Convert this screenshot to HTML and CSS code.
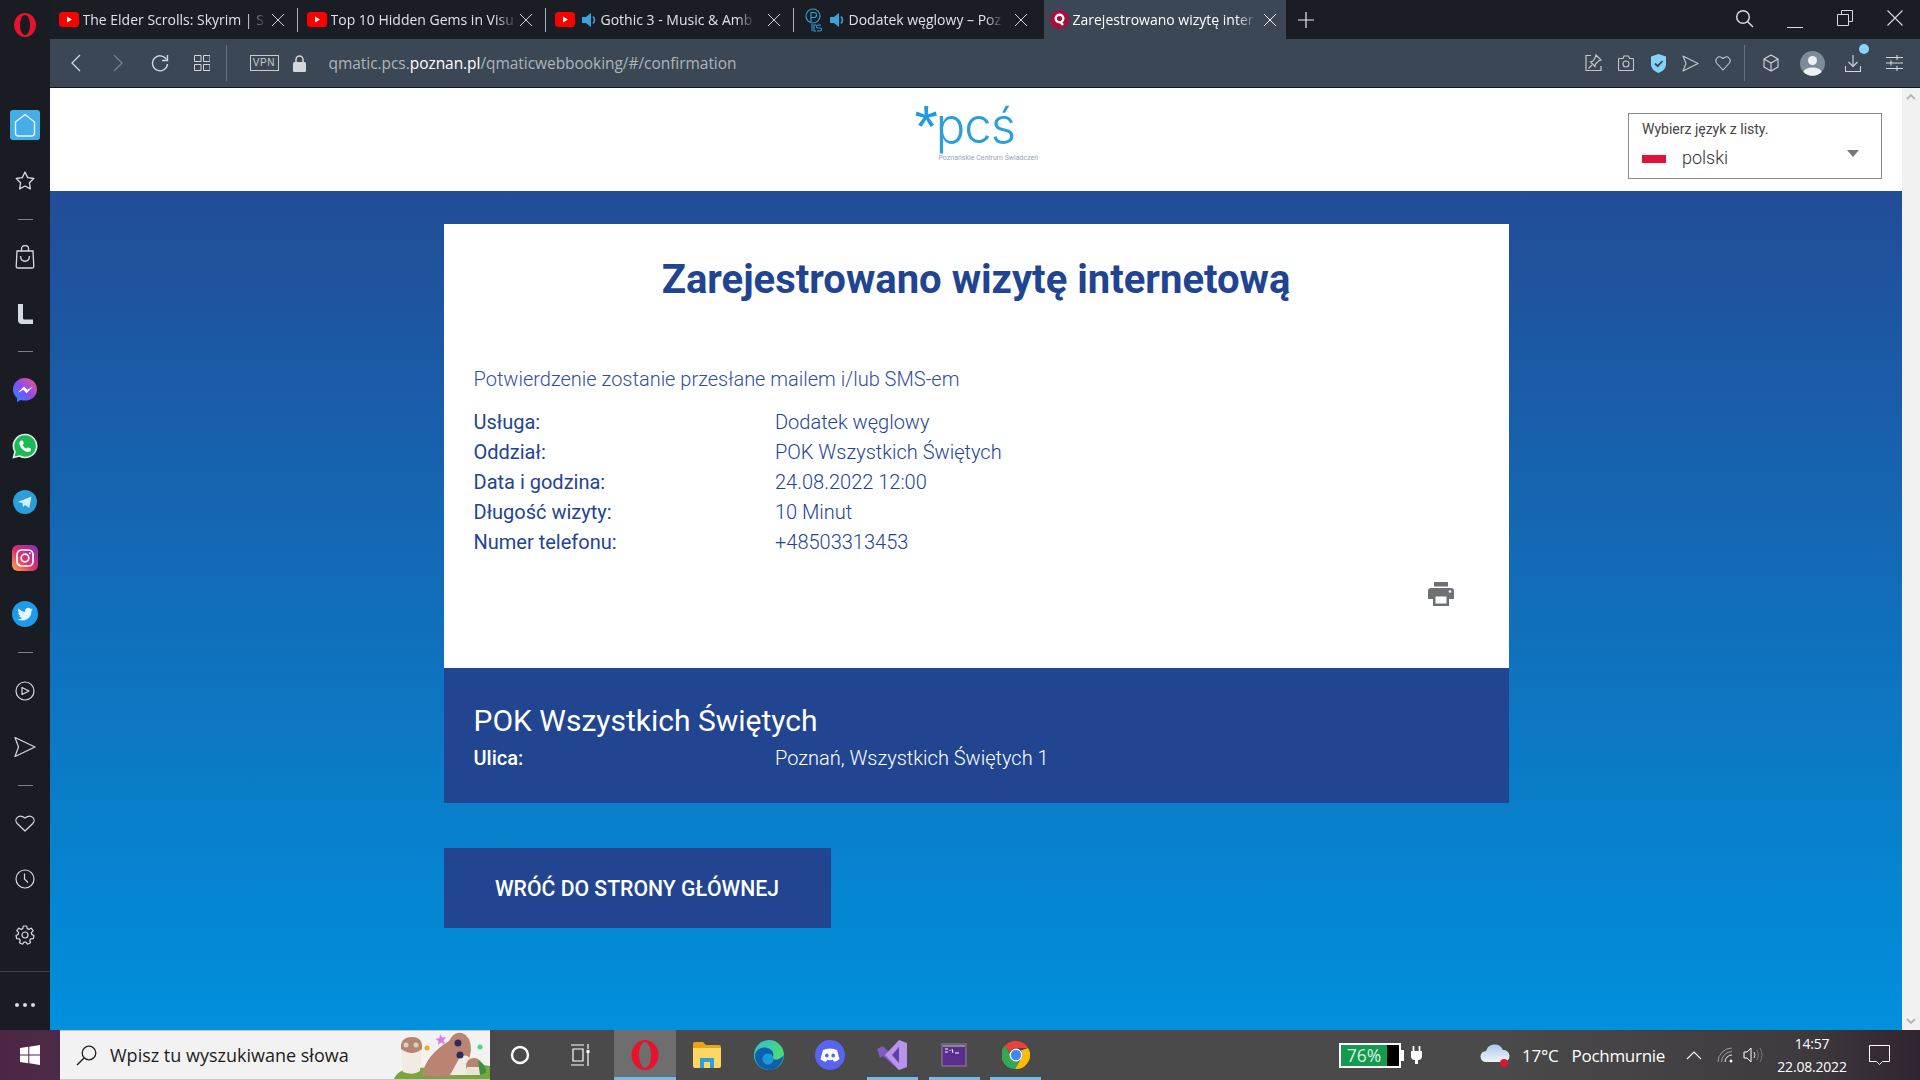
FILE: index.html
```html
<!DOCTYPE html>
<html lang="pl">
<head>
<meta charset="utf-8">
<title>Zarejestrowano wizytę internetową</title>
<link rel="stylesheet" href="styles.css">
</head>
<body>
<div class="screen">
  <div class="browser">
    <aside class="sidebar">
      <div class="side-logo">
        <svg width="26" height="26" viewBox="0 0 26 26"><path fill-rule="evenodd" d="M13 1a11 12 0 1 0 .01 0zM13 3a5 10 0 1 1-.01 0z" fill="#e8122d"/></svg>
      </div>
      <div class="slot">
        <span class="home-btn"><svg width="22" height="24" viewBox="0 0 22 24"><path d="M11 1.500 20.500 9v11a3 3 0 0 1-3 3h-13a3 3 0 0 1-3-3V9z" fill="none" stroke="#e8f5fc" stroke-width="1.400" stroke-linejoin="round"/></svg></span>
      </div>
      <div class="slot"><svg class="ico" width="22" height="22" viewBox="0 0 22 22"><path d="M11 2l2.700 5.600 6.100.9-4.400 4.300 1 6.100-5.400-2.900-5.400 2.900 1-6.100L2.200 8.500l6.100-.9z" fill="none" stroke="#d7dbe0" stroke-width="1.300" stroke-linejoin="round"/></svg></div>
      <div class="side-sep"></div>
      <div class="slot"><svg class="ico" width="20" height="24" viewBox="0 0 20 24"><path d="M2 6h16l.8 15.500a1.500 1.500 0 0 1-1.500 1.500H2.700a1.500 1.500 0 0 1-1.500-1.500zM6.500 6V3.500a3.500 3 0 0 1 7 0V6M5.500 11c.5 7 8.500 7 9 0" fill="none" stroke="#d7dbe0" stroke-width="1.300"/></svg></div>
      <div class="slot"><svg class="ico" width="18" height="22" viewBox="0 0 18 22"><path d="M2 1h5v14q0 1.500 1.500 1.500H17V21H6q-4 0-4-4z" fill="#d5dae2"/></svg></div>
      <div class="side-sep"></div>
      <div class="slot"><svg width="26" height="26" viewBox="0 0 26 26"><defs><linearGradient id="ms" x1="0" y1="1" x2="1" y2="0"><stop offset="0" stop-color="#1a8cff"/><stop offset=".5" stop-color="#8d4bf0"/><stop offset="1" stop-color="#f5587a"/></linearGradient></defs><path d="M13 1C6.200 1 1 5.900 1 12.400c0 3.500 1.500 6.500 4 8.600V25l3.700-2c1.300.4 2.800.6 4.300.6 6.800 0 12-4.900 12-11.200S19.800 1 13 1z" fill="url(#ms)"/><path d="M5.500 16 12 9.500l3.400 3.300 5.600-3.300-6.400 6.700-3.300-3.400z" fill="#fff"/></svg></div>
      <div class="slot"><svg width="26" height="26" viewBox="0 0 26 26"><path d="M13 1.500A11.500 11.500 0 0 0 3 18.700L1.500 24.500l6-1.500A11.500 11.500 0 1 0 13 1.500z" fill="#1db954" stroke="#e8eef0" stroke-width="1.600"/><path d="M9 7.500c-1.500 1-2 2.500-1.300 4.500 1 3 4 5.800 6.800 6.700 2 .6 3.500 0 4.500-1.500l-.4-1.700-2.800-1.200-1.300 1.500c-1.700-.6-3.400-2.300-4-4l1.400-1.200-1-2.900z" fill="#fff"/></svg></div>
      <div class="slot"><svg width="24" height="24" viewBox="0 0 24 24"><circle cx="12" cy="12" r="12" fill="#2a9ed8"/><path d="M4.500 12 18.500 6.500 16.200 18l-4.200-3-2 2-.5-4z" fill="#d6ecf7"/></svg></div>
      <div class="slot"><svg width="26" height="26" viewBox="0 0 26 26"><defs><linearGradient id="ig" x1="0" y1="1" x2="1" y2="0"><stop offset="0" stop-color="#fcb045"/><stop offset=".45" stop-color="#e1306c"/><stop offset="1" stop-color="#7a35c4"/></linearGradient></defs><rect width="26" height="26" rx="6" fill="url(#ig)"/><rect x="5" y="5" width="16" height="16" rx="4.500" fill="none" stroke="#fff" stroke-width="1.700"/><circle cx="13" cy="13" r="3.800" fill="none" stroke="#fff" stroke-width="1.700"/><circle cx="17.800" cy="8.200" r="1" fill="#fff"/></svg></div>
      <div class="slot"><svg width="26" height="26" viewBox="0 0 26 26"><circle cx="13" cy="13" r="13" fill="#1d9bea"/><path d="M21 8.500c-.6.300-1.200.400-1.900.5.700-.4 1.200-1 1.400-1.800-.6.400-1.300.6-2 .8a3.200 3.200 0 0 0-5.500 2.900 9 9 0 0 1-6.500-3.300c-.9 1.500-.4 3.400 1 4.300-.5 0-1-.2-1.400-.4 0 1.500 1.100 2.800 2.500 3.100-.5.100-1 .2-1.400.1.400 1.300 1.600 2.200 3 2.200A6.400 6.400 0 0 1 5.500 18a9 9 0 0 0 13.900-8c.6-.400 1.200-1 1.600-1.500z" fill="#e6f4fd"/></svg></div>
      <div class="side-sep"></div>
      <div class="slot"><svg class="ico" width="20" height="20" viewBox="0 0 20 20"><circle cx="10" cy="10" r="9" fill="none" stroke="#d7dbe0" stroke-width="1.200"/><path d="M7 6.500v7l7-3.500z" fill="none" stroke="#d7dbe0" stroke-width="1.200" stroke-linejoin="round"/></svg></div>
      <div class="slot"><svg class="ico" width="22" height="22" viewBox="0 0 22 22"><path d="M1 1.500 21 11 1 20.500 4.500 11z" fill="none" stroke="#d7dbe0" stroke-width="1.200" stroke-linejoin="round"/></svg></div>
      <div class="side-sep"></div>
      <div class="slot"><svg class="ico" width="20" height="18" viewBox="0 0 20 18"><path d="M10 17 2.200 9.500C-1.500 5.500 3.500-1 10 4c6.500-5 11.500 1.500 7.800 5.500z" fill="none" stroke="#d7dbe0" stroke-width="1.200" stroke-linejoin="round"/></svg></div>
      <div class="slot"><svg class="ico" width="20" height="20" viewBox="0 0 20 20"><circle cx="10" cy="10" r="9" fill="none" stroke="#d7dbe0" stroke-width="1.200"/><path d="M9.500 4.500V10l3.500 3.500" fill="none" stroke="#d7dbe0" stroke-width="1.200"/></svg></div>
      <div class="slot"><svg class="ico" width="20" height="20" viewBox="0 0 20 20"><circle cx="10" cy="10" r="3" fill="none" stroke="#d7dbe0" stroke-width="1.200"/><path d="M8.300 1h3.400l.5 2.600 1.700.8 2.300-1.300 2 2.600-1.800 1.900.3 1.800L19 10.500l-.7 3.100-2.600.2-1 1.500.8 2.500-3 1.400-1.500-2.100h-2L7.500 19.200l-3-1.400.8-2.500-1-1.500-2.600-.2L1 10.500l2.300-1.100.3-1.800-1.800-1.900 2-2.600 2.300 1.300 1.700-.8z" fill="none" stroke="#d7dbe0" stroke-width="1.200" stroke-linejoin="round"/></svg></div>
      <div class="side-bottom"><span class="dot"></span><span class="dot"></span><span class="dot"></span></div>
    </aside>
    <div class="window">
      <div class="tabstrip">
        <div class="tab">
          <svg class="yt" width="20" height="15" viewBox="0 0 20 15"><rect width="20" height="15" rx="3.500" fill="#f00"/><path d="M8 4.500v6l5-3z" fill="#fff"/></svg>
          <span class="tab-title">The Elder Scrolls: Skyrim | S</span>
          <svg class="tab-x" width="14" height="14" viewBox="0 0 14 14"><path d="M1 1l12 12M13 1 1 13" stroke="#cfd3d8" stroke-width="1"/></svg>
          <span class="tab-sep"></span>
        </div>
        <div class="tab">
          <svg class="yt" width="20" height="15" viewBox="0 0 20 15"><rect width="20" height="15" rx="3.500" fill="#f00"/><path d="M8 4.500v6l5-3z" fill="#fff"/></svg>
          <span class="tab-title">Top 10 Hidden Gems in Visu</span>
          <svg class="tab-x" width="14" height="14" viewBox="0 0 14 14"><path d="M1 1l12 12M13 1 1 13" stroke="#cfd3d8" stroke-width="1"/></svg>
          <span class="tab-sep"></span>
        </div>
        <div class="tab">
          <svg class="yt" width="20" height="15" viewBox="0 0 20 15"><rect width="20" height="15" rx="3.500" fill="#f00"/><path d="M8 4.500v6l5-3z" fill="#fff"/></svg>
          <svg class="spk" width="15" height="16" viewBox="0 0 15 16"><path d="M0 5h4l5-4v14l-5-4H0z" fill="#3ba4e0"/><path d="M11 4.500q3 3.500 0 7" fill="none" stroke="#3ba4e0" stroke-width="1.500"/></svg>
          <span class="tab-title">Gothic 3 - Music &amp; Amb</span>
          <svg class="tab-x" width="14" height="14" viewBox="0 0 14 14"><path d="M1 1l12 12M13 1 1 13" stroke="#cfd3d8" stroke-width="1"/></svg>
          <span class="tab-sep"></span>
        </div>
        <div class="tab tab-wide">
          <svg class="pcs" width="20" height="24" viewBox="0 0 20 24"><circle cx="10" cy="8" r="7" fill="none" stroke="#2a9fd8" stroke-width="1.200"/><path d="M8 14V4.500h3a2 2 0 0 1 0 5H8" fill="none" stroke="#2a9fd8" stroke-width="1.200"/><path d="M9 23v-7M18 17h-3a1 1 0 0 0 0 3h2a1 1 0 0 1 0 3h-3M13 17h-2v6h2" fill="none" stroke="#2a9fd8" stroke-width="1.100"/></svg>
          <svg class="spk" width="15" height="16" viewBox="0 0 15 16"><path d="M0 5h4l5-4v14l-5-4H0z" fill="#3ba4e0"/><path d="M11 4.500q3 3.500 0 7" fill="none" stroke="#3ba4e0" stroke-width="1.500"/></svg>
          <span class="tab-title">Dodatek węglowy – Poz</span>
          <svg class="tab-x" width="14" height="14" viewBox="0 0 14 14"><path d="M1 1l12 12M13 1 1 13" stroke="#cfd3d8" stroke-width="1"/></svg>
        </div>
        <div class="tab tab-active">
          <svg class="q-ico" width="19" height="19" viewBox="0 0 19 19"><circle cx="9.500" cy="9.500" r="9.500" fill="#a80d3d"/><circle cx="9.500" cy="8.500" r="3.800" fill="none" stroke="#fff" stroke-width="2.400"/><path d="M10.500 12l2.500 3" stroke="#fff" stroke-width="2.400"/></svg>
          <span class="tab-title">Zarejestrowano wizytę inter</span>
          <svg class="tab-x" width="14" height="14" viewBox="0 0 14 14"><path d="M1 1l12 12M13 1 1 13" stroke="#f0f2f4" stroke-width="1"/></svg>
        </div>
        <svg class="new-tab" width="16" height="16" viewBox="0 0 16 16"><path d="M8 0v16M0 8h16" stroke="#e8eaed" stroke-width="1.200"/></svg>
        <div class="win-controls">
          <svg class="win-search" width="19" height="19" viewBox="0 0 19 19"><circle cx="8" cy="8" r="6.300" fill="none" stroke="#d6d9dd" stroke-width="1.500"/><path d="M12.500 12.500 18 18" stroke="#d6d9dd" stroke-width="1.500"/></svg>
          <svg class="win-min" width="16" height="16" viewBox="0 0 16 16"><path d="M0 15.500h16" stroke="#d6d9dd" stroke-width="1"/></svg>
          <svg class="win-restore" width="16" height="16" viewBox="0 0 16 16"><path d="M.5 4.500h11v11H.5zM4.500 4.500V.5h11v11h-4" fill="none" stroke="#d6d9dd" stroke-width="1"/></svg>
          <svg class="win-close" width="16" height="16" viewBox="0 0 16 16"><path d="M.5.500l15 15M15.500.500l-15 15" stroke="#d6d9dd" stroke-width="1.100"/></svg>
        </div>
      </div>
      <div class="toolbar">
        <span class="tool"><svg width="10" height="18" viewBox="0 0 10 18"><path d="M9 1 1 9l8 8" fill="none" stroke="#d3d7dc" stroke-width="1.300"/></svg></span>
        <span class="tool"><svg width="10" height="18" viewBox="0 0 10 18"><path d="M1 1l8 8-8 8" fill="none" stroke="#79838f" stroke-width="1.300"/></svg></span>
        <span class="tool"><svg width="18" height="18" viewBox="0 0 18 18"><path d="M15.500 5.500A7.500 7.500 0 1 0 16.500 10" fill="none" stroke="#d3d7dc" stroke-width="1.400"/><path d="M16.500 1v5.500H11" fill="none" stroke="#d3d7dc" stroke-width="1.400"/></svg></span>
        <span class="tool"><svg width="16" height="16" viewBox="0 0 16 16"><path d="M.5.500h6.500v6H.5zM9.500.500H16v6H9.500zM.5 9.500h6.500v6H.5zM9.500 9.500H16v6H9.500z" fill="none" stroke="#d3d7dc" stroke-width="1"/></svg></span>
        <span class="tool-sep tool-sep-left"></span>
        <span class="vpn">VPN</span>
        <svg class="lock" width="13" height="17" viewBox="0 0 13 17"><path d="M3 7V4.500a3.500 3.500 0 0 1 7 0V7" fill="none" stroke="#d3d7dc" stroke-width="1.500"/><rect y="7" width="13" height="10" rx="1.500" fill="#d3d7dc"/></svg>
        <div class="url"><span>qmatic.pcs.</span><b>poznan.pl</b><span>/qmaticwebbooking/#/confirmation</span></div>
        <span class="tool-sm"><svg width="17" height="18" viewBox="0 0 17 18"><path d="M6 1.500H1v15h15V12" fill="none" stroke="#c3c8ce" stroke-width="1.200"/><path d="M11 1l5 5-2.500 1-3 3-.5 2.500-4.500-4.500L8 7l2-3zM7 11l-3.500 3.500" fill="none" stroke="#c3c8ce" stroke-width="1.200"/></svg></span>
        <span class="tool-sm"><svg width="16" height="16" viewBox="0 0 16 16"><path d="M1.500 3.500H5L6 1h4.500l1 2.500h3a1 1 0 0 1 1 1v10a1 1 0 0 1-1 1h-13a1 1 0 0 1-1-1v-10a1 1 0 0 1 1-1z" fill="none" stroke="#c3c8ce" stroke-width="1.100"/><circle cx="8" cy="9" r="3" fill="none" stroke="#c3c8ce" stroke-width="1.100"/></svg></span>
        <span class="tool-sm"><svg width="15" height="19" viewBox="0 0 15 19"><path d="M7.500 0 15 2.500v8c0 4-3.500 7-7.500 8.500C3.500 17.500 0 14.500 0 10.500v-8z" fill="#85d2f8"/><path d="M4 9.500l2.700 2.700L11.500 7" fill="none" stroke="#39485a" stroke-width="1.800"/></svg></span>
        <span class="tool-sm"><svg width="17" height="17" viewBox="0 0 17 17"><path d="M1 1l15 7.500L1 16l3-7.500z" fill="none" stroke="#c3c8ce" stroke-width="1.100" stroke-linejoin="round"/></svg></span>
        <span class="tool-sm"><svg width="16" height="16" viewBox="0 0 16 16"><path d="M8 15 2 8.500C-1 5 3-1 8 3.500 13-1 17 5 14 8.500z" fill="none" stroke="#c3c8ce" stroke-width="1.100" stroke-linejoin="round"/></svg></span>
        <span class="tool-sep tool-sep-right"></span>
        <span class="tool-lg"><svg width="16" height="18" viewBox="0 0 16 18"><path d="M8 1l7 4v8l-7 4-7-4V5zM1 5l7 4 7-4M8 9v8" fill="none" stroke="#d3d7dc" stroke-width="1.100" stroke-linejoin="round"/></svg></span>
        <span class="tool-lg"><svg width="25" height="25" viewBox="0 0 25 25"><circle cx="12.500" cy="12.500" r="12.500" fill="#7d8a9a"/><circle cx="12.500" cy="9.500" r="4.500" fill="#eef1f4"/><path d="M3.500 21c1-6 17-6 18 0a12.500 12.500 0 0 1-18 0z" fill="#eef1f4"/></svg></span>
        <span class="tool-lg dl"><svg width="16" height="18" viewBox="0 0 16 18"><path d="M8 1v11M3.500 8 8 12.500 12.500 8M.5 12v5.500h15V12" fill="none" stroke="#d3d7dc" stroke-width="1.100"/></svg><i class="dl-dot"></i></span>
        <span class="tool-lg"><svg width="17" height="16" viewBox="0 0 17 16"><path d="M0 2.500h17M0 8h17M0 13.500h17M11 0v5M5 5.500v5M11 11v5" stroke="#d3d7dc" stroke-width="1.100"/></svg></span>
      </div>
      <div class="viewport">
        <div class="page">
          <header class="page-head">
            <div class="logo">
              <div class="logo-mark"><span class="logo-star">*</span><span class="logo-word">pcś</span></div>
              <div class="logo-sub">Poznańskie Centrum Świadczeń</div>
            </div>
            <div class="lang">
              <div class="lang-label">Wybierz język z listy.</div>
              <div class="lang-row"><span class="flag"></span><span class="lang-name">polski</span><span class="caret"></span></div>
            </div>
          </header>
          <main class="page-main">
            <section class="card">
              <h1>Zarejestrowano wizytę internetową</h1>
              <p class="notice">Potwierdzenie zostanie przesłane mailem i/lub SMS-em</p>
              <dl class="rows">
                <div class="row"><dt>Usługa:</dt><dd>Dodatek węglowy</dd></div>
                <div class="row"><dt>Oddział:</dt><dd>POK Wszystkich Świętych</dd></div>
                <div class="row"><dt>Data i godzina:</dt><dd>24.08.2022 12:00</dd></div>
                <div class="row"><dt>Długość wizyty:</dt><dd>10 Minut</dd></div>
                <div class="row"><dt>Numer telefonu:</dt><dd>+48503313453</dd></div>
              </dl>
              <div class="print-row"><svg width="26" height="24" viewBox="0 0 26 24"><path d="M6 0h14v4.500H6zM3 6h20a3 3 0 0 1 3 3v8h-5v7H5v-7H0V9a3 3 0 0 1 3-3z" fill="#6f7073"/><rect x="7.500" y="14.500" width="11" height="7" fill="#fff"/><circle cx="22" cy="9.500" r="1.300" fill="#fff"/></svg></div>
            </section>
            <section class="branch">
              <h2>POK Wszystkich Świętych</h2>
              <div class="row branch-row"><span class="branch-key">Ulica:</span><span class="branch-val">Poznań, Wszystkich Świętych 1</span></div>
            </section>
            <a class="back-btn">WRÓĆ DO STRONY GŁÓWNEJ</a>
          </main>
        </div>
        <div class="scrollbar">
          <svg width="10" height="7" viewBox="0 0 10 7"><path d="M1 6l4-4 4 4" fill="none" stroke="#b5b5b5" stroke-width="1.800"/></svg>
          <svg width="10" height="7" viewBox="0 0 10 7"><path d="M1 1l4 4 4-4" fill="none" stroke="#b5b5b5" stroke-width="1.800"/></svg>
        </div>
      </div>
    </div>
  </div>
  <footer class="taskbar">
    <div class="start"><svg width="20" height="20" viewBox="0 0 20 20"><path d="M0 3l8.300-1.200v7.700H0zM9.300 1.700 20 0v9.500H9.300zM0 10.500h8.300v7.700L0 17zM9.300 10.500H20V20L9.300 18.300z" fill="#fff"/></svg></div>
    <div class="search">
      <svg class="search-ico" width="21" height="21" viewBox="0 0 21 21"><circle cx="13" cy="8" r="6.800" fill="none" stroke="#222" stroke-width="1.300"/><path d="M8 13 1 20" stroke="#222" stroke-width="1.500"/></svg>
      <span class="search-text">Wpisz tu wyszukiwane słowa</span>
      <svg class="owls" width="96" height="48" viewBox="0 0 96 48"><path d="M0 48q4-10 20-11l50-2q18-2 26 0v13z" fill="#7aa63c"/><path d="M7 18q-1-12 11-12 11 0 10 12l-2 22q-7 5-17 1z" fill="#f1ebe4"/><path d="M7 18q-1-12 11-12 11 0 10 12-10 8-21 0z" fill="#b48672"/><path d="M28 44q4-20 27-34 5-10 13-8 9 3 9 17l-2 10-12 15q-20 3-35 0z" fill="#bb8472"/><path d="M56 44l10-18q8-4 10 3l-2 15z" fill="#f1ebe4"/><circle cx="12" cy="14" r="2.500" fill="#d8d4b8"/><circle cx="22" cy="14" r="2.500" fill="#d8d4b8"/><circle cx="64" cy="12" r="3.500" fill="#2a2d5c"/><circle cx="66" cy="24" r="3.500" fill="#2a2d5c"/><circle cx="80" cy="35" r="8" fill="#b48672"/><path d="M73 36h14v8H73z" fill="#e9e3d8"/><path d="M84 30q8 2 8 12l-6 2z" fill="#3f8f3f"/><circle cx="33" cy="17" r="2.500" fill="#f2a81d"/><circle cx="86" cy="16" r="2.500" fill="#3ddc84"/><path d="M46 3l2 3.500 4-.5-2.500 3.500 1.500 4-4-2-3 2.500.5-4-3-2 4-1z" fill="#d67bf0"/></svg>
    </div>
    <div class="task-cell"><svg width="20" height="20" viewBox="0 0 20 20"><circle cx="10" cy="10" r="8" fill="none" stroke="#fff" stroke-width="2.400"/></svg></div>
    <div class="task-cell task-cell-view"><svg width="20" height="22" viewBox="0 0 20 22"><path d="M1 1h13M1 21h13M3 5h10v12H3zM18 0v5M18 9v13" fill="none" stroke="#fff" stroke-width="1.200"/><rect x="16.500" y="6" width="3" height="3" fill="#fff"/></svg></div>
    <div class="apps">
      <div class="app app-on app-active"><svg width="30" height="34" viewBox="0 0 30 34"><path fill-rule="evenodd" d="M15 2a13.500 15 0 1 0 .01 0zM15 4a6 13 0 1 1-.01 0z" fill="#e8122d"/></svg></div>
      <div class="app"><svg width="28" height="28" viewBox="0 0 28 28"><path d="M0 3a2 2 0 0 1 2-2h8l3 3h13a2 2 0 0 1 2 2v3H0z" fill="#e8a317"/><path d="M0 7h28v18a2 2 0 0 1-2 2H2a2 2 0 0 1-2-2z" fill="#fdd663"/><path d="M7 27V17h14v10h-4v-6h-6v6z" fill="#2f9de0"/></svg></div>
      <div class="app"><svg width="30" height="30" viewBox="0 0 30 30"><defs><linearGradient id="ed" x1="0" y1="0" x2="1" y2="1"><stop offset="0" stop-color="#2dbbd8"/><stop offset=".6" stop-color="#47d97f"/></linearGradient></defs><circle cx="15" cy="15" r="15" fill="url(#ed)"/><path d="M1 16c0-7 9-11 15-7 3 2 4 5 3 8-1 3 3 3 6 2 2-1 4-3 5-4-1 9-8 15-15 15C8 30 1 24 1 16z" fill="#0f5fb0"/><circle cx="14" cy="19" r="5.500" fill="#1b9ad8"/></svg></div>
      <div class="app"><svg width="30" height="30" viewBox="0 0 30 30"><circle cx="15" cy="15" r="15" fill="#5865f2"/><path d="M8 10q7-3 14 0l2.500 9q-2.500 2.500-5.500 2.800l-1.200-2q-3 .8-5.600 0l-1.200 2q-3-.3-5.500-2.800z" fill="#fff"/><ellipse cx="11.800" cy="15.500" rx="1.800" ry="2" fill="#5865f2"/><ellipse cx="18.200" cy="15.500" rx="1.800" ry="2" fill="#5865f2"/></svg></div>
      <div class="app app-on"><svg width="30" height="30" viewBox="0 0 30 30"><path d="M0 9l6-3 16 17v7l-16-14-3 2z" fill="#7d5cc4"/><path d="M22 0l8 3v24l-8 3L8 15z" fill="#b992ea"/><path d="M22 7v16l-7-8z" fill="#5f3fa8"/></svg></div>
      <div class="app app-on"><svg width="26" height="24" viewBox="0 0 26 24"><rect x="1" y="1" width="24" height="22" fill="#5c2d91" stroke="#8a8a8a" stroke-width="1"/><path d="M2 2h22v2H2z" fill="#8a8a8a"/><path d="M4 6h3M4 9h3M9 7v1M11 6l1 4M14 10h4" stroke="#fff" stroke-width="1"/></svg></div>
      <div class="app app-on"><svg width="28" height="28" viewBox="0 0 28 28"><path d="M14 0a14 14 0 0 1 12.100 7H14a7 7 0 0 0-6.500 4.500L3 4.500A14 14 0 0 1 14 0z" fill="#ea4335"/><path d="M26.100 7A14 14 0 0 1 13 28l6-10.500A7 7 0 0 0 19 9.500z" fill="#fbbc04"/><path d="M13 28A14 14 0 0 1 3 4.500l6 10.500a7 7 0 0 0 9 3z" fill="#34a853"/><circle cx="14" cy="14" r="5.800" fill="#4285f4" stroke="#fff" stroke-width="1.300"/></svg></div>
    </div>
    <div class="tray">
      <div class="battery"><span class="bat-fill"><span class="bat-text">76%</span></span><span class="bat-rest"></span></div>
      <svg class="plug" width="11" height="18" viewBox="0 0 11 18"><path d="M2.500 0v5M8.500 0v5" stroke="#fff" stroke-width="1.800"/><path d="M0 5h11v5q0 4-4 4v4H4v-4q-4 0-4-4z" fill="#fff"/></svg>
      <svg class="cloud" width="30" height="26" viewBox="0 0 30 26"><defs><linearGradient id="cl" x1="0" y1="0" x2="0" y2="1"><stop offset="0" stop-color="#a8c9ec"/><stop offset="1" stop-color="#f1f4f8"/></linearGradient></defs><path d="M6 20a5.500 5.500 0 0 1 0-11 9 9 0 0 1 17-1 6 6 0 0 1 1 12z" fill="url(#cl)"/><circle cx="24" cy="21" r="4" fill="#dd1537"/></svg>
      <span class="temp">17°C</span>
      <span class="weather">Pochmurnie</span>
      <svg class="chev" width="16" height="9" viewBox="0 0 16 9"><path d="M1 8l7-7 7 7" fill="none" stroke="#fff" stroke-width="1.100"/></svg>
      <svg class="wifi" width="16" height="16" viewBox="0 0 16 16"><path d="M1 15A14 14 0 0 1 15 1M4.500 15A10.500 10.500 0 0 1 15 4.500" fill="none" stroke="#9e9e9e" stroke-width="1"/><path d="M8 15a7 7 0 0 1 7-7" fill="none" stroke="#eee" stroke-width="1"/><circle cx="14" cy="14" r="1.500" fill="#fff"/></svg>
      <svg class="speaker" width="20" height="18" viewBox="0 0 20 18"><path d="M1 6h3l4-4v14l-4-4H1z" fill="none" stroke="#fff" stroke-width="1"/><path d="M11 6q2 3 0 6" fill="none" stroke="#ddd" stroke-width="1"/><path d="M14 4q3 5 0 10M17 2q4 7 0 14" fill="none" stroke="#777" stroke-width="1"/></svg>
      <div class="clock"><span>14:57</span><span>22.08.2022</span></div>
      <svg class="notif" width="21" height="20" viewBox="0 0 21 20"><path d="M.5.500h20v16h-7l-3 3-3-3h-7z" fill="none" stroke="#fff" stroke-width="1"/></svg>
    </div>
  </footer>
</div>
</body>
</html>
```
FILE: styles.css
```css
* { box-sizing: border-box; }
html, body { margin: 0; padding: 0; width: 1920px; height: 1080px; overflow: hidden; }
body { font-family: Roboto, "Liberation Sans", sans-serif; }
svg { display: block; flex: none; }

.screen { width: 1920px; height: 1080px; display: flex; flex-direction: column; }
.browser { display: flex; height: 1030px; }

/* sidebar */
.sidebar { width: 50px; flex: none; background: #191d23; display: flex; flex-direction: column; align-items: center; }
.side-logo { height: 50px; margin-bottom: 47px; display: flex; align-items: center; justify-content: center; flex: none; }
.slot { height: 56.15px; width: 100%; flex: none; display: flex; align-items: center; justify-content: center; }
.home-btn { width: 30px; height: 30px; background: #45aee6; border-radius: 3px; display: flex; align-items: center; justify-content: center; }
.side-sep { height: 20.15px; flex: none; width: 100%; display: flex; align-items: center; justify-content: center; }
.side-sep::before { content: ""; width: 15px; height: 1px; background: #7b8087; }
.side-bottom { margin-top: auto; height: 59px; width: 100%; border-top: 1px solid #3b4149; display: flex; align-items: center; justify-content: center; gap: 4px; padding-top: 7px; flex: none; }
.dot { width: 4px; height: 4px; border-radius: 50%; background: #d7dbe0; }

.window { flex: 1; min-width: 0; display: flex; flex-direction: column; }

/* tabs */
.tabstrip { height: 39px; flex: none; background: #1a1e24; display: flex; align-items: center; color: #dfe2e6; font-family: "Open Sans", sans-serif; font-size: 14px; }
.tab { width: 248px; height: 39px; flex: none; display: flex; align-items: center; padding-left: 9px; }
.tab-wide { width: 250px; }
.tab-active { width: 242px; padding-left: 6px; background: #3b4754; color: #fff; }
.tab-title { flex: 0 1 auto; min-width: 0; white-space: nowrap; -webkit-mask-image: linear-gradient(to right, #000 90%, rgba(0,0,0,.15) 100%); mask-image: linear-gradient(to right, #000 90%, rgba(0,0,0,.15) 100%); letter-spacing: 0; margin-left: 3.5px; }
.spk { margin-left: 7px; }
.tab-x { margin-left: auto; margin-right: 12px; }
.tab-sep { width: 1px; height: 24px; background: #aeb4bc; flex: none; }
.tab-wide .tab-x { margin-right: 16px; }
.tab-active .tab-x { margin-right: 9px; }
.new-tab { margin-left: 12px; }
.win-controls { margin-left: auto; display: flex; align-items: center; height: 39px; }
.win-search { margin-right: 33px; margin-top: -2px; }
.win-min { margin-right: 34px; }
.win-restore { margin-right: 34px; margin-top: -4px; }
.win-close { margin-right: 17px; margin-top: -4px; }

/* toolbar */
.toolbar { height: 49px; flex: none; background: #3b4754; border-bottom: 1px solid #14181c; display: flex; align-items: center; padding: 0 5.5px 0 4.5px; }
.tool { width: 42px; display: flex; justify-content: center; flex: none; }
.tool-sm { width: 32.5px; display: flex; justify-content: center; flex: none; }
.tool-lg { width: 41px; display: flex; justify-content: center; flex: none; position: relative; }
.tool-sep { width: 1px; height: 36px; background: #69727d; flex: none; }
.tool-sep-left { margin-left: 3px; }
.tool-sep-right { margin: 0 6px 0 4px; }
.vpn { margin-left: 23px; width: 29px; height: 16px; border: 1px solid #c8ccd1; color: #c8ccd1; font-size: 10px; line-height: 14px; text-align: center; letter-spacing: .6px; flex: none; font-family: "Liberation Sans", sans-serif; }
.lock { margin-left: 14px; }
.url { margin-left: 23px; flex: 1; font-family: "Open Sans", sans-serif; font-size: 15.5px; color: #aeb5bd; white-space: nowrap; letter-spacing: -.05px; }
.url b { font-weight: 400; color: #fff; }
.dl-dot { position: absolute; width: 10px; height: 10px; border-radius: 50%; background: #8ad3fb; top: -10px; left: 26px; }

/* page */
.viewport { flex: 1; min-height: 0; display: flex; }
.page { flex: 1; min-width: 0; display: flex; flex-direction: column; }
.scrollbar { width: 18px; flex: none; background: #f1f1f1; display: flex; flex-direction: column; justify-content: space-between; align-items: center; padding: 5px 0; }
.page-head { height: 103px; flex: none; background: #fff; display: grid; grid-template-columns: 1fr 123px 1fr; }
.logo { grid-column: 2; width: 123px; display: flex; flex-direction: column; align-items: flex-start; padding-top: 9px; }
.logo-mark { display: flex; align-items: flex-start; height: 55px; color: #2a9fdc; }
.logo-star { font-family: "Liberation Sans", sans-serif; font-size: 60px; line-height: 50px; margin-right: -2px; margin-top: 5px; color: #1f9ade; }
.logo-word { font-family: Inter, sans-serif; font-weight: 300; font-size: 49px; line-height: 50px; letter-spacing: -1px; margin-top: 4px; }
.logo-sub { font-family: Roboto, sans-serif; font-size: 7px; color: #9aa4b4; margin-left: 24px; white-space: nowrap; margin-top: 2px; }
.lang { grid-column: 3; justify-self: end; margin: 25px 20px 0 0; width: 254px; height: 66px; border: 1px solid #8a8a8a; border-bottom-width: 1.500px; padding: 6px 13px; color: #444; }
.lang-label { font-size: 14px; line-height: 18px; }
.lang-row { display: flex; align-items: center; margin-top: 7.500px; }
.flag { width: 24px; height: 10px; background: linear-gradient(#f4f4f4 20%, #dc143c 20%); flex: none; }
.lang-name { margin-left: 16px; font-size: 18px; font-weight: 300; color: #333; line-height: 24px; }
.caret { margin-left: auto; margin-right: 9px; margin-top: -8px; width: 0; height: 0; border-left: 6px solid transparent; border-right: 6px solid transparent; border-top: 7px solid #777; }

.page-main { flex: 1; min-height: 0; background: linear-gradient(#224c98, #0090dc); padding-top: 33px; display: flex; flex-direction: column; align-items: flex-start; padding-left: 393.5px; }
.card { width: 1065px; height: 444px; background: #fff; padding: 0 30px; color: #224592; flex: none; }
.card h1 { margin: 0; padding-top: 32px; height: 95px; text-align: center; font-size: 40px; line-height: 48px; font-weight: 700; color: #1f4492; }
.notice { margin: 46px 0 0; font-size: 20px; font-weight: 300; line-height: 28px; color: #2f4f9c; }
.rows { margin: 14px 0 0; }
.row { display: flex; font-size: 20px; line-height: 30px; }
.row dt { width: 301.5px; flex: none; font-weight: 400; }
.row dd { margin: 0; font-weight: 300; }
.print-row { display: flex; justify-content: flex-end; margin-top: 25px; padding-right: 25px; }
.branch { width: 1065px; height: 135px; flex: none; background: #224592; padding: 35px 30px 0; color: #fff; }
.branch h2 { margin: 0; font-size: 30px; line-height: 36px; font-weight: 400; }
.branch-row { margin-top: 4px; font-size: 20px; }
.branch-key { width: 301.5px; flex: none; font-weight: 500; }
.branch-val { font-weight: 300; }
.back-btn { margin-top: 45px; width: 387px; height: 80px; flex: none; background: #224592; color: #fff; font-size: 21.2px; font-weight: 500; display: flex; align-items: center; justify-content: center; }

/* taskbar */
.taskbar { height: 50px; flex: none; display: flex; align-items: stretch; background: linear-gradient(to right, #4d2545 0, #4a2b47 60px, #4a4a4a 500px, #4a4a4a 1500px, #3f3a40 1800px, #2f2530 100%); color: #fff; }
.start { width: 60px; flex: none; display: flex; align-items: center; justify-content: center; }
.search { width: 430px; flex: none; background: #f2f2f2; border: 1px solid #c9c9c9; border-width: 1px 0; display: flex; align-items: center; position: relative; padding-left: 16px; color: #1d1d1d; overflow: hidden; }
.search-text { margin-left: 13px; font-family: "Open Sans", sans-serif; font-size: 18px; white-space: nowrap; }
.owls { margin-left: auto; align-self: flex-end; }
.task-cell { width: 60px; flex: none; display: flex; align-items: center; justify-content: center; }
.task-cell-view { width: 60px; margin-right: 4px; }
.apps { display: flex; flex: none; }
.app { width: 61.85px; display: flex; align-items: center; justify-content: center; padding: 0 5px; }
.app-on { background: linear-gradient(#76b9ed, #76b9ed) center bottom / 51px 3px no-repeat; }
.app-active { background: linear-gradient(#76b9ed, #76b9ed) center bottom / 100% 3px no-repeat, #6e6e6e; }
.tray { margin-left: auto; display: flex; align-items: center; flex: none; padding-right: 30px; font-family: "Open Sans", sans-serif; }
.battery { width: 62px; height: 25px; flex: none; border: 2px solid #fff; display: flex; position: relative; }
.battery::after { content: ""; position: absolute; right: -5px; top: 5px; width: 3px; height: 11px; background: #fff; }
.bat-fill { width: 46px; background: #129a4e; display: flex; align-items: center; justify-content: center; font-size: 17.5px; color: #dfeee3; }
.bat-rest { flex: 1; background: #000; }
.plug { margin-left: 10px; }
.cloud { margin-left: 58px; }
.temp { margin-left: 12px; font-size: 17px; white-space: nowrap; letter-spacing: -.2px; }
.weather { margin-left: 13px; font-size: 17px; white-space: nowrap; letter-spacing: -.3px; }
.chev { margin-left: 21px; }
.wifi { margin-left: 15px; }
.speaker { margin-left: 10px; }
.clock { margin-left: 11px; width: 76px; display: flex; flex-direction: column; align-items: center; font-size: 14px; line-height: 23px; letter-spacing: -.2px; }
.notif { margin-left: 19px; }
```
